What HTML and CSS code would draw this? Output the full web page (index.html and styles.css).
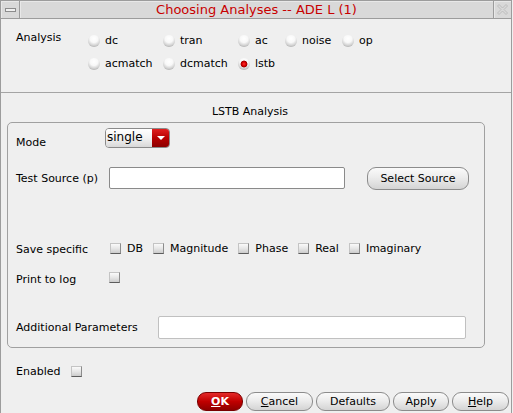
FILE: index.html
```html
<!DOCTYPE html>
<html>
<head>
<meta charset="utf-8">
<title>Choosing Analyses -- ADE L (1)</title>
<link rel="stylesheet" href="styles.css">
</head>
<body>
<div class="win">
  <div class="titlebar">
    <div class="tb-btn tb-min"><span class="min-bar"></span></div>
    <div class="tb-title">Choosing Analyses -- ADE L (1)</div>
    <div class="tb-btn tb-close">
      <svg width="13" height="13" viewBox="0 0 13 13">
        <path d="M1.5 3 L3 1.5 L6.5 5 L10 1.5 L11.5 3 L8 6.5 L11.5 10 L10 11.5 L6.5 8 L3 11.5 L1.5 10 L5 6.5 Z" fill="none" stroke="#bdbdbd" stroke-width="1"/>
      </svg>
    </div>
  </div>

  <div class="analysis">
    <div class="an-label">Analysis</div>
    <div class="an-grid">
      <div class="opt"><span class="radio"></span>dc</div>
      <div class="opt"><span class="radio"></span>tran</div>
      <div class="opt"><span class="radio"></span>ac</div>
      <div class="opt"><span class="radio"></span>noise</div>
      <div class="opt"><span class="radio"></span>op</div>
      <div class="opt"><span class="radio"></span>acmatch</div>
      <div class="opt"><span class="radio"></span>dcmatch</div>
      <div class="opt"><span class="radio on"></span>lstb</div>
    </div>
  </div>

  <div class="sec-title">LSTB Analysis</div>

  <div class="frame">
    <div class="row row-mode">
      <div class="lbl w-mode">Mode</div>
      <div class="combo"><span class="combo-text">single</span><span class="combo-arrow"></span></div>
    </div>
    <div class="row row-src">
      <div class="lbl w-src">Test Source (p)</div>
      <div class="field field-src"></div>
      <div class="pbtn btn-select">Select Source</div>
    </div>
    <div class="row row-save">
      <div class="lbl w-save">Save specific</div>
      <div class="checks">
        <div class="chk"><span class="cb"></span>DB</div>
        <div class="chk"><span class="cb"></span>Magnitude</div>
        <div class="chk"><span class="cb"></span>Phase</div>
        <div class="chk"><span class="cb"></span>Real</div>
        <div class="chk"><span class="cb"></span>Imaginary</div>
      </div>
    </div>
    <div class="row row-print">
      <div class="lbl w-print">Print to log</div>
      <span class="cb"></span>
    </div>
    <div class="row row-add">
      <div class="lbl w-add">Additional Parameters</div>
      <div class="field field-add"></div>
    </div>
  </div>

  <div class="enabled-row">
    <div class="lbl w-en">Enabled</div>
    <span class="cb"></span>
  </div>

  <div class="btn-row">
    <div class="pbtn btn-ok"><u>O</u>K</div>
    <div class="pbtn btn-cancel"><u>C</u>ancel</div>
    <div class="pbtn btn-defaults">Defaults</div>
    <div class="pbtn btn-apply">Apply</div>
    <div class="pbtn btn-help"><u>H</u>elp</div>
  </div>
</div>
</body>
</html>
```

FILE: styles.css
```css
html, body {
  margin: 0;
  padding: 0;
  background: #efefef;
}
body {
  font-family: "DejaVu Sans", "Liberation Sans", sans-serif;
  font-size: 11px;
  line-height: 14px;
  color: #000;
}
.win {
  width: 512px;
  height: 413px;
  box-sizing: border-box;
  border-left: 1px solid #9c9c9c;
  border-right: 1px solid #9c9c9c;
  background: #efefef;
  overflow: hidden;
}

/* title bar */
.titlebar {
  display: flex;
  height: 19px;
  box-sizing: border-box;
  border-top: 1px solid #9c9c9c;
  border-bottom: 1px solid #9c9c9c;
  background: #d9d9d9;
}
.tb-btn {
  display: flex;
  align-items: center;
  justify-content: center;
  background: #d9d9d9;
  box-shadow: inset 1px 1px 0 #e8e8e8;
}
.tb-min {
  width: 18px;
  border-right: 1px solid #9c9c9c;
}
.min-bar {
  width: 9px;
  height: 2px;
  border: 1px solid #8c8c8c;
  background: #f0f0f0;
  margin-top: 1px;
}
.tb-title {
  flex: 1;
  border-right: 1px solid #9c9c9c;
  box-shadow: inset 1px 1px 0 #e8e8e8;
  text-align: center;
  color: #c80000;
  font-size: 13px;
  line-height: 17px;
}
.tb-close {
  width: 17px;
}

/* analysis section */
.analysis {
  display: flex;
  padding: 15px 0 21px 15px;
  border-bottom: 1px solid #a4a4a4;
}
.an-label {
  width: 72px;
  margin-top: -3px;
}
.an-grid {
  display: grid;
  grid-template-columns: 75px 75px 47px 57px auto;
  grid-auto-rows: 14px;
  row-gap: 9px;
}
.opt {
  display: flex;
  align-items: center;
  gap: 5px;
}
.radio {
  width: 12px;
  height: 12px;
  border-radius: 50%;
  background: radial-gradient(circle at 50% 30%, #ffffff 0%, #f8f8f8 38%, #d2d2d2 66%, #8e8e8e 100%);
  flex: none;
}
.radio.on {
  background:
    radial-gradient(circle at 50% 50%, #ff3030 0, #d80000 2px, #a00000 3px, rgba(160,0,0,0) 3.8px),
    radial-gradient(circle at 50% 30%, #ffffff 0%, #f8f8f8 38%, #d2d2d2 66%, #8e8e8e 100%);
}

/* section title */
.sec-title {
  margin-top: 12px;
  padding-right: 12px;
  text-align: center;
}

/* group frame */
.frame {
  margin: 3px 0 0 6px;
  width: 478px;
  height: 226px;
  box-sizing: border-box;
  border: 1px solid #a0a0a0;
  border-radius: 5px;
  padding-left: 8px;
}
.row {
  display: flex;
  align-items: flex-start;
}
.lbl {
  flex: none;
}
.row-mode { height: 27px; }
.row-mode .lbl { margin-top: 13px; }
.w-mode { width: 89px; }
.combo {
  margin-top: 5px;
  width: 65px;
  height: 20px;
  box-sizing: border-box;
  display: flex;
  border: 1px solid #8a8a8a;
  border-radius: 4px;
  overflow: hidden;
}
.combo-text {
  flex: 1;
  background: linear-gradient(#ffffff, #f2f2f2 50%, #d8d8d8);
  padding-left: 1px;
  line-height: 17px;
  font-size: 12px;
}
.combo-arrow {
  width: 17px;
  background: linear-gradient(#e02020, #b80000 50%, #8c0000);
  position: relative;
}
.combo-arrow::after {
  content: "";
  position: absolute;
  left: 5px;
  top: 7px;
  border-left: 4px solid transparent;
  border-right: 4px solid transparent;
  border-top: 4px solid #ffffff;
}

.row-src { height: 40px; }
.w-src { width: 93px; margin-top: 22px; }
.field {
  background: #ffffff;
  box-sizing: border-box;
  border-radius: 2px;
}
.field-src {
  margin-top: 17px;
  width: 236px;
  height: 22px;
  border: 1px solid #8a8a8a;
}
.pbtn {
  box-sizing: border-box;
  text-align: center;
  border: 1px solid #8c8c8c;
  border-radius: 9px;
  background: linear-gradient(#fafafa, #ececec 45%, #d4d4d4);
  flex: none;
}
.btn-select {
  margin: 17px 0 0 22px;
  width: 102px;
  height: 23px;
  line-height: 21px;
}

.row-save { height: 67px; }
.w-save { width: 94px; margin-top: 53px; }
.checks {
  display: flex;
  gap: 10px;
  margin-top: 53px;
}
.chk {
  display: flex;
  align-items: center;
  gap: 6px;
  height: 11px;
}
.cb {
  display: block;
  flex: none;
  width: 11px;
  height: 11px;
  box-sizing: border-box;
  border: 1px solid;
  border-color: #c4c4c4 #8c8c8c #5c5c5c #c4c4c4;
  background: linear-gradient(#fafafa, #e6e6e6 50%, #cccccc);
}

.row-print { height: 30px; }
.w-print { width: 93px; margin-top: 16px; }
.row-print .cb { margin-top: 15px; }

.row-add { height: 52px; }
.w-add { width: 142px; margin-top: 34px; }
.field-add {
  margin-top: 29px;
  width: 308px;
  height: 23px;
  border: 1px solid #c0c0c0;
}

/* enabled */
.enabled-row {
  display: flex;
  align-items: flex-start;
  margin-top: 17px;
  padding-left: 15px;
  height: 14px;
}
.w-en { width: 55px; }
.enabled-row .cb { margin-top: 1px; }

/* bottom buttons */
.btn-row {
  display: flex;
  justify-content: flex-end;
  gap: 3px;
  margin-top: 13px;
  padding-right: 2px;
}
.btn-row .pbtn {
  height: 19px;
  line-height: 18px;
}
.btn-row u {
  text-decoration: underline;
}
.btn-ok {
  width: 46px;
  background: linear-gradient(#e42a2a, #c00000 50%, #8e0000);
  border-color: #7a0000;
  color: #fff;
  font-weight: bold;
}
.btn-cancel { width: 67px; }
.btn-defaults { width: 74px; }
.btn-apply { width: 56px; }
.btn-help { width: 57px; }
```
